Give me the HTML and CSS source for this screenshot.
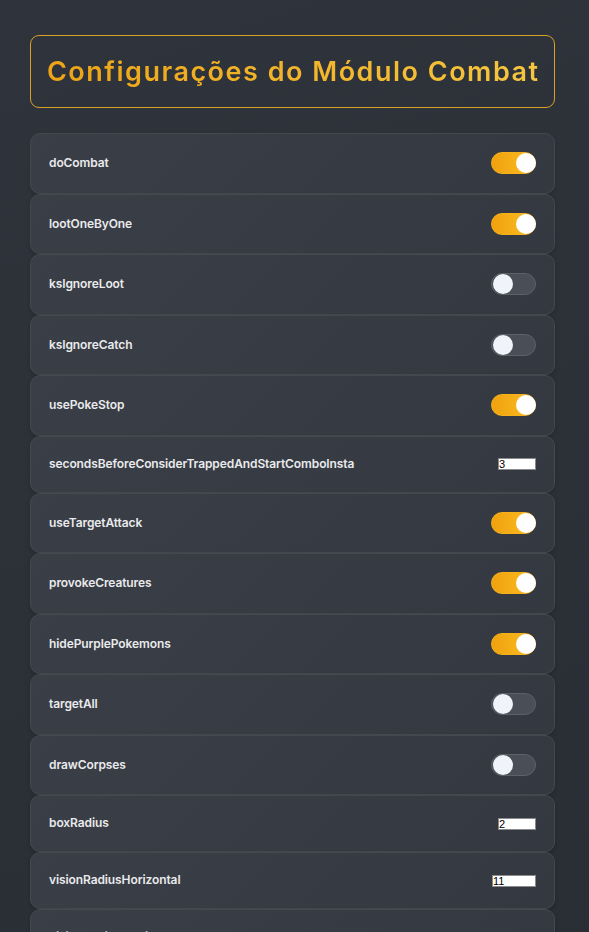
FILE: index.html
```html
<!DOCTYPE html>
<html lang="pt-BR">
<head>
    <meta charset="UTF-8">
    <title>Configurações do Módulo Combat</title>
    <link rel="stylesheet" href="styles.css">
</head>
<body>
    <div class="container">
        <h1 class="title-box"><span class="title">Configurações do Módulo Combat</span></h1>

        <div class="settings">
            <div class="row">
                <span class="label">doCombat</span>
                <label class="switch"><input type="checkbox" checked><span class="slider"></span></label>
            </div>
            <div class="row">
                <span class="label">lootOneByOne</span>
                <label class="switch"><input type="checkbox" checked><span class="slider"></span></label>
            </div>
            <div class="row">
                <span class="label">ksIgnoreLoot</span>
                <label class="switch"><input type="checkbox"><span class="slider"></span></label>
            </div>
            <div class="row">
                <span class="label">ksIgnoreCatch</span>
                <label class="switch"><input type="checkbox"><span class="slider"></span></label>
            </div>
            <div class="row">
                <span class="label">usePokeStop</span>
                <label class="switch"><input type="checkbox" checked><span class="slider"></span></label>
            </div>
            <div class="row">
                <span class="label">secondsBeforeConsiderTrappedAndStartComboInsta</span>
                <input class="num" type="text" value="3">
            </div>
            <div class="row">
                <span class="label">useTargetAttack</span>
                <label class="switch"><input type="checkbox" checked><span class="slider"></span></label>
            </div>
            <div class="row">
                <span class="label">provokeCreatures</span>
                <label class="switch"><input type="checkbox" checked><span class="slider"></span></label>
            </div>
            <div class="row">
                <span class="label">hidePurplePokemons</span>
                <label class="switch"><input type="checkbox" checked><span class="slider"></span></label>
            </div>
            <div class="row">
                <span class="label">targetAll</span>
                <label class="switch"><input type="checkbox"><span class="slider"></span></label>
            </div>
            <div class="row">
                <span class="label">drawCorpses</span>
                <label class="switch"><input type="checkbox"><span class="slider"></span></label>
            </div>
            <div class="row">
                <span class="label">boxRadius</span>
                <input class="num" type="text" value="2">
            </div>
            <div class="row">
                <span class="label">visionRadiusHorizontal</span>
                <input class="num wide" type="text" value="11">
            </div>
            <div class="row">
                <span class="label">visionRadiusVertical</span>
                <input class="num" type="text" value="8">
            </div>
        </div>
    </div>
</body>
</html>
```

FILE: styles.css
```css
body {
    margin: 0;
    padding: 35px 34px 30px 30px;
    font-family: Inter, "Noto Sans", sans-serif;
    background: linear-gradient(160deg, #2f333b, #292d34);
    min-height: 100vh;
    box-sizing: border-box;
    color: #e8e9eb;
}
.container { max-width: 525px; }

.title-box {
    margin: 0 0 25px;
    height: 73px;
    box-sizing: border-box;
    border: 1px solid #d9a126;
    border-radius: 9px;
    display: flex;
    align-items: center;
    justify-content: center;
}
.title {
    font-size: 27px;
    font-weight: 600;
    letter-spacing: 1.5px;
    margin-right: -1.5px;
    background: linear-gradient(90deg, #eea416, #f6c63f);
    -webkit-background-clip: text;
    background-clip: text;
    color: transparent;
}

.settings { display: flex; flex-direction: column; }
.row {
    display: flex;
    align-items: center;
    justify-content: space-between;
    padding: 18.25px 18px;
    border: 1px solid #44484f;
    border-radius: 10px;
    background: linear-gradient(135deg, #3a3e46, #343840);
    box-shadow: 0 2px 4px rgba(0, 0, 0, 0.15);
}
.label {
    font-size: 12px;
    font-weight: 600;
    letter-spacing: -0.1px;
    line-height: 18.5px;
    color: #e9eaec;
}

.switch { position: relative; width: 45px; height: 22px; display: inline-block; }
.switch input { display: none; }
.slider {
    position: absolute;
    inset: 0;
    border-radius: 11px;
    background: #4a4e56;
    border: 1px solid #5d6169;
}
.slider::before {
    content: "";
    position: absolute;
    left: 1px;
    top: 0;
    width: 20px;
    height: 20px;
    border-radius: 50%;
    background: #f0f4fa;
}
.switch input:checked + .slider {
    background: linear-gradient(90deg, #f0a20e, #fbbd22);
    border-color: #f5b11c;
}
.switch input:checked + .slider::before {
    left: auto;
    right: -1px;
    background: #fff;
}

.num {
    width: 38px;
    height: 12px;
    box-sizing: border-box;
    padding: 0;
    border: 1px solid #8a8a8a;
    font-family: "Liberation Sans", Arial, sans-serif;
    font-size: 11px;
    line-height: 10px;
    background: #fff;
    color: #000;
}
.num.wide { width: 44px; }
```
